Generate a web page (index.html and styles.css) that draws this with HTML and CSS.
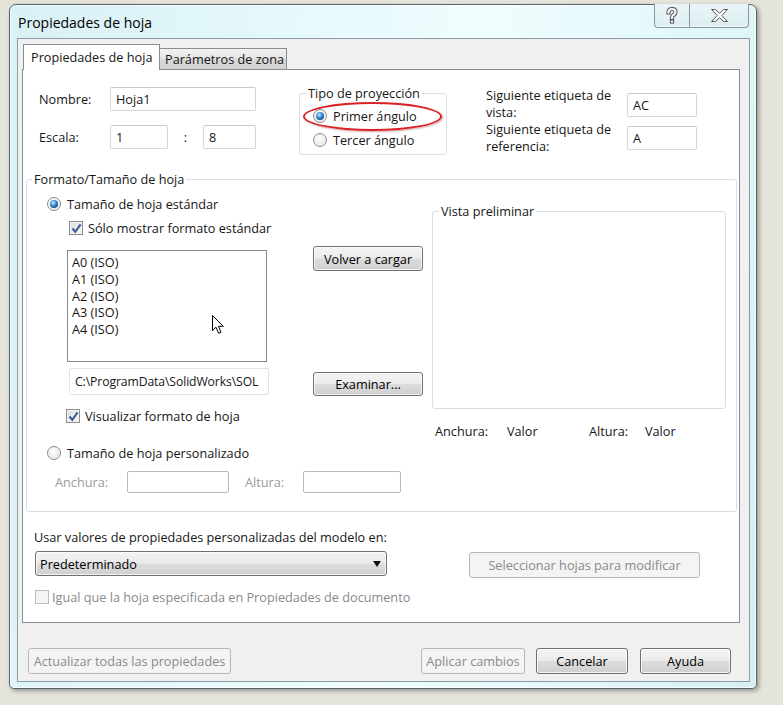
FILE: index.html
```html
<!DOCTYPE html>
<html lang="es">
<head>
<meta charset="utf-8">
<title>Propiedades de hoja</title>
<link rel="stylesheet" href="styles.css">
</head>
<body>
<div class="desk">
  <div class="window">
    <div class="titlebar">
      <div class="title">Propiedades de hoja</div>
      <div class="caption-btns">
        <div class="cbtn help">
          <svg width="14" height="18" viewBox="0 0 14 18">
            <path d="M3.5 5.5 C3.5 3 5 2 7 2 C9.2 2 10.5 3.2 10.5 5 C10.5 6.8 9.3 7.4 8.2 8.2 C7.3 8.8 7 9.4 7 11" fill="none" stroke="#5a5a5a" stroke-width="4.2" stroke-linecap="square"/>
            <rect x="4.9" y="12.6" width="4.2" height="4" fill="#5a5a5a"/>
            <path d="M3.5 5.5 C3.5 3 5 2 7 2 C9.2 2 10.5 3.2 10.5 5 C10.5 6.8 9.3 7.4 8.2 8.2 C7.3 8.8 7 9.4 7 11" fill="none" stroke="#f4f7f8" stroke-width="2.2" stroke-linecap="square"/>
            <rect x="5.9" y="13.6" width="2.2" height="2" fill="#f4f7f8"/>
          </svg>
        </div>
        <div class="cbtn close">
          <svg width="19" height="15" viewBox="0 0 19 15">
            <polygon points="1.5,1.5 5.5,1.5 9.5,5.3 13.5,1.5 17.5,1.5 11.8,7.5 17.5,13.5 13.5,13.5 9.5,9.7 5.5,13.5 1.5,13.5 7.2,7.5" fill="#f6f8f9" stroke="#5a5a5a" stroke-width="1" stroke-linejoin="round"/>
          </svg>
        </div>
      </div>
    </div>

    <div class="client">
      <div class="tabs">
        <div class="tab active">Propiedades de hoja</div>
        <div class="tab">Parámetros de zona</div>
      </div>

      <div class="panel">
        <div class="top">
          <div class="namecol">
            <div class="frow"><span class="lbl">Nombre:</span><div class="input w146">Hoja1</div></div>
            <div class="frow mt14"><span class="lbl">Escala:</span><div class="input w58">1</div><span class="colon">:</span><div class="input w53">8</div></div>
          </div>

          <fieldset class="group proj">
            <legend>Tipo de proyección</legend>
            <div class="proj-body">
              <div class="opt marked"><span class="radio on"></span><span>Primer ángulo</span><span class="ring"></span></div>
              <div class="opt second"><span class="radio"></span><span>Tercer ángulo</span></div>
            </div>
          </fieldset>

          <div class="labels">
            <div class="lrow first"><span class="ltext">Siguiente etiqueta de<br>vista:</span><div class="input w70">AC</div></div>
            <div class="lrow"><span class="ltext">Siguiente etiqueta de<br>referencia:</span><div class="input w70">A</div></div>
          </div>
        </div>

        <fieldset class="group fmt">
          <legend>Formato/Tamaño de hoja</legend>
          <div class="fmt-body">
            <div class="fmt-left">
              <div class="opt"><span class="radio on"></span><span>Tamaño de hoja estándar</span></div>
              <div class="opt chk-row1"><span class="check on"><svg width="11" height="11" viewBox="0 0 11 11"><path d="M1.5 5.5 L4.3 8.8 L9.6 1.3" fill="none" stroke="#3b5a94" stroke-width="2"/></svg></span><span>Sólo mostrar formato estándar</span></div>
              <div class="list-row">
                <div class="listbox">
                  <div class="li">A0 (ISO)</div>
                  <div class="li">A1 (ISO)</div>
                  <div class="li">A2 (ISO)</div>
                  <div class="li">A3 (ISO)</div>
                  <div class="li">A4 (ISO)</div>
                  <svg class="cursor" width="13" height="20" viewBox="0 0 13 20"><path d="M0.5 0.5 L0.5 15.5 L4 12.2 L6.6 18.3 L9 17.3 L6.5 11.3 L11.3 11.3 Z" fill="#fff" stroke="#000" stroke-width="1" stroke-linejoin="round"/></svg>
                </div>
                <div class="btn reload">Volver a cargar</div>
              </div>
              <div class="path-row">
                <div class="input path"><span class="path-text">C:\ProgramData\SolidWorks\SOL</span></div>
                <div class="btn browse">Examinar...</div>
              </div>
              <div class="opt chk-row2"><span class="check on"><svg width="11" height="11" viewBox="0 0 11 11"><path d="M1.5 5.5 L4.3 8.8 L9.6 1.3" fill="none" stroke="#3b5a94" stroke-width="2"/></svg></span><span>Visualizar formato de hoja</span></div>
              <div class="opt custom-radio"><span class="radio"></span><span>Tamaño de hoja personalizado</span></div>
              <div class="custom-row">
                <span class="dlbl lw">Anchura:</span><div class="input dis w102"></div>
                <span class="dlbl lh">Altura:</span><div class="input dis w98"></div>
              </div>
            </div>

            <div class="fmt-right">
              <fieldset class="group preview">
                <legend>Vista preliminar</legend>
                <div class="preview-area"></div>
              </fieldset>
              <div class="dims">
                <span class="d1">Anchura:</span><span class="d2">Valor</span><span class="d3">Altura:</span><span>Valor</span>
              </div>
            </div>
          </div>
        </fieldset>

        <div class="model">
          <div class="mlabel">Usar valores de propiedades personalizadas del modelo en:</div>
          <div class="mrow">
            <div class="select"><span>Predeterminado</span><span class="arrow"></span></div>
            <div class="btn disabled sel-sheets">Seleccionar hojas para modificar</div>
          </div>
          <div class="opt mcheck"><span class="check dis"></span><span class="distext">Igual que la hoja especificada en Propiedades de documento</span></div>
        </div>
      </div>

      <div class="actions">
        <div class="btn disabled b-update">Actualizar todas las propiedades</div>
        <div class="btn disabled b-apply">Aplicar cambios</div>
        <div class="btn b-cancel">Cancelar</div>
        <div class="btn b-help">Ayuda</div>
      </div>
    </div>
  </div>
</div>
</body>
</html>
```

FILE: styles.css
```css
* { box-sizing: border-box; }
html, body { margin: 0; padding: 0; }
body {
  font-family: "Open Sans", "Noto Sans", "DejaVu Sans", sans-serif;
  font-size: 12.7px;
  color: #161616;
  background: #e5e4db;
}
.desk {
  width: 783px;
  height: 705px;
  padding: 4px 0 0 9px;
  overflow: hidden;
  background: #e5e4db;
}
.window {
  width: 748px;
  height: 685px;
  border: 1px solid #56626c;
  border-radius: 7px 7px 5px 5px;
  background: linear-gradient(100deg, #d9f0f5 0%, #e4f8fb 30%, #effdfe 55%, #e2f7fa 80%, #d6eff3 100%);
  box-shadow: 2px 2px 4px rgba(0,0,0,.35), inset 0 0 0 1px rgba(255,255,255,.75);
  display: flex;
  flex-direction: column;
}
.titlebar {
  height: 33px;
  display: flex;
  align-items: flex-start;
}
.title {
  flex: 1;
  font-size: 14px;
  line-height: 18px;
  padding: 9px 0 0 8px;
  color: #000;
}
.caption-btns {
  display: flex;
  margin: -1px 7px 0 0;
  height: 24px;
  border: 1px solid #8795a1;
  border-top: none;
  border-radius: 0 0 4px 4px;
  background: linear-gradient(#e9f6f8, #dcedf1);
  box-shadow: inset 0 -1px 0 rgba(255,255,255,.7);
}
.cbtn {
  display: flex;
  align-items: center;
  justify-content: center;
  height: 100%;
}
.cbtn.help { width: 34px; padding-top: 1px; }
.cbtn.close { width: 59px; border-left: 1px solid #8795a1; }

.client {
  margin-left: 7px;
  width: 733px;
  height: 644px;
  border: 1px solid #8d99a3;
  background: #f0f0f0;
}
.tabs {
  position: relative;
  z-index: 1;
  display: flex;
  align-items: flex-end;
  height: 26px;
  margin: 5px 0 0 5px;
}
.tab {
  height: 21px;
  margin-bottom: 1px;
  width: 127px;
  padding-left: 5px;
  line-height: 20px;
  border: 1px solid #898c95;
  border-left: none;
  border-bottom: none;
  background: linear-gradient(#f2f2f2, #e6e6e6 45%, #d9d9d9 50%, #d2d2d2);
  white-space: nowrap;
  overflow: hidden;
}
.tab.active {
  height: 26px;
  margin-bottom: 0;
  width: 137px;
  padding-left: 7px;
  line-height: 24px;
  border-left: 1px solid #898c95;
  background: #fff;
}
.panel {
  margin: -1px 0 0 4px;
  width: 718px;
  height: 554px;
  border: 1px solid #898c95;
  background: #fff;
}

.top {
  display: flex;
  align-items: flex-start;
  padding: 15px 0 0 16px;
}
.namecol { margin-top: 2px; flex: none; }
.frow { display: flex; align-items: center; height: 24px; }
.mt14 { margin-top: 14px; }
.lbl { width: 71px; flex: none; }
.colon { width: 35px; text-align: center; flex: none; }
.input {
  flex: none;
  height: 24px;
  border: 1px solid #d7d7d7;
  border-top-color: #c9c9c9;
  border-radius: 2px;
  background: #fff;
  padding: 0 5px;
  line-height: 22px;
  white-space: nowrap;
  overflow: hidden;
}
.w146 { width: 146px; }
.w58 { width: 58px; }
.w53 { width: 53px; }
.w70 { width: 70px; }
.w102 { width: 102px; height: 22px; }
.w98 { width: 98px; height: 22px; }

fieldset.group {
  margin: 0;
  padding: 0;
  border: 1px solid #d5dfe5;
  border-radius: 3px;
  min-width: 0;
  flex: none;
}
fieldset.group legend {
  padding: 0 2px;
  line-height: 16px;
}
fieldset.proj { width: 148px; margin-left: 43px; }
fieldset.proj legend { margin-left: 6px; }
.proj-body { padding: 7px 0 6px 13px; }
.opt {
  position: relative;
  display: flex;
  align-items: center;
  height: 16px;
  line-height: 16px;
  white-space: nowrap;
}
.proj .second { margin-top: 8px; }
.radio {
  position: relative;
  flex: none;
  width: 14px;
  height: 14px;
  margin-right: 6px;
  border-radius: 50%;
  border: 1px solid #8b8b8b;
  background: radial-gradient(circle at 45% 40%, #ffffff 0, #f0f0f0 45%, #cfcfcf 100%);
  box-shadow: inset 0 0 0 1px #f4f4f4;
}
.radio.on::after {
  content: "";
  position: absolute;
  left: 2px;
  top: 2px;
  width: 8px;
  height: 8px;
  border-radius: 50%;
  background: radial-gradient(circle at 40% 35%, #d6efff 0, #59a5e6 30%, #1a5ca6 65%, #0b305e 100%);
}
.ring {
  position: absolute;
  left: -10px;
  top: -6px;
  width: 139px;
  height: 29px;
  border: 2px solid #d92226;
  border-radius: 50%;
  box-shadow: 1px 1px 2px rgba(120,0,0,.35);
  pointer-events: none;
}
.labels { margin: 2px 0 0 39px; flex: none; }
.lrow { display: flex; align-items: center; }
.lrow.first .input { margin-top: 3px; }
.lrow + .lrow { margin-top: 1px; }
.ltext { width: 141px; line-height: 16.5px; flex: none; }

fieldset.fmt { width: 711px; margin: 16px 0 0 3px; }
fieldset.fmt legend { margin-left: 5px; }
.fmt-body { display: flex; align-items: flex-start; padding: 9px 0 18px 20px; }
.fmt-left { width: 376px; flex: none; }
.chk-row1 { margin-top: 8px; padding-left: 22px; }
.check {
  flex: none;
  display: flex;
  align-items: center;
  justify-content: center;
  width: 14px;
  height: 14px;
  margin-right: 5px;
  border: 1px solid #8e8f8f;
  background: linear-gradient(135deg, #dcdcdc, #f8f8f8);
  box-shadow: inset 0 0 0 1px #f2f2f2;
}
.check.dis {
  border-color: #bdbdbd;
  background: #f4f4f4;
  box-shadow: none;
  margin-right: 3px;
}
.list-row { display: flex; align-items: flex-start; margin-top: 10px; }
.listbox {
  position: relative;
  flex: none;
  margin: 4px 0 0 20px;
  width: 200px;
  height: 112px;
  border: 1px solid #828790;
  padding: 3px 0 0 4px;
}
.li { line-height: 16.8px; }
.cursor { position: absolute; left: 144px; top: 64px; }
.btn {
  flex: none;
  display: flex;
  align-items: center;
  justify-content: center;
  height: 25px;
  border: 1px solid #707070;
  border-radius: 3px;
  background: linear-gradient(#f3f3f3 0, #ebebeb 48%, #dddddd 52%, #cfcfcf 100%);
  box-shadow: inset 0 0 0 1px rgba(255,255,255,.75);
  white-space: nowrap;
  color: #000;
}
.btn.disabled {
  border-color: #b5b8ba;
  background: #f4f4f4;
  box-shadow: none;
  color: #8a8a8a;
}
.reload { width: 110px; margin-left: 46px; }
.path-row { display: flex; align-items: flex-start; margin-top: 6px; height: 27px; }
.input.path {
  width: 200px;
  height: 27px;
  line-height: 25px;
  margin-left: 22px;
  padding: 0 2px 0 5px;
  border-color: #e2e2e2;
}
.path-text { font-size: 12.2px; letter-spacing: -0.1px; }
.browse { width: 110px; margin: 4px 0 0 44px; height: 24px; }
.chk-row2 { margin-top: 13px; padding-left: 19px; }
.custom-radio { margin-top: 21px; }
.custom-row { display: flex; align-items: center; margin-top: 10px; height: 22px; }
.dlbl { color: #9a9a9a; flex: none; }
.lw { width: 72px; margin-left: 8px; }
.lh { width: 58px; margin-left: 16px; }
.input.dis { border-color: #b9b9b9; border-radius: 2px; }

.fmt-right { margin: 7px 0 0 9px; width: 294px; flex: none; }
fieldset.preview { width: 294px; }
fieldset.preview legend { margin-left: 6px; }
.preview-area { height: 189px; }
.dims { display: flex; margin-top: 14px; padding-left: 3px; line-height: 16px; }
.d1 { width: 72px; }
.d2 { width: 82px; }
.d3 { width: 56px; }

.model { margin: 17px 0 0 11px; }
.mlabel { line-height: 16px; }
.mrow { display: flex; align-items: flex-start; margin-top: 6px; }
.select {
  flex: none;
  display: flex;
  align-items: center;
  justify-content: space-between;
  margin-left: 1px;
  width: 352px;
  height: 25px;
  padding: 0 5px 0 4px;
  border: 1px solid #707070;
  border-radius: 3px;
  background: linear-gradient(#f3f3f3 0, #ebebeb 48%, #dddddd 52%, #cfcfcf 100%);
  box-shadow: inset 0 0 0 1px rgba(255,255,255,.75);
  color: #000;
}
.arrow {
  width: 0;
  height: 0;
  border-left: 4.5px solid transparent;
  border-right: 4.5px solid transparent;
  border-top: 6px solid #111;
}
.sel-sheets { width: 231px; height: 26px; margin: 1px 0 0 82px; }
.mcheck { margin-top: 11px; padding-left: 1px; }
.distext { color: #8a8a8a; }

.actions { display: flex; margin-top: 25px; padding-left: 10px; }
.actions .btn { height: 26px; }
.b-update { width: 203px; }
.b-apply { width: 104px; margin-left: 190px; }
.b-cancel { width: 92px; margin-left: 11px; }
.b-help { width: 91px; margin-left: 12px; }
```
